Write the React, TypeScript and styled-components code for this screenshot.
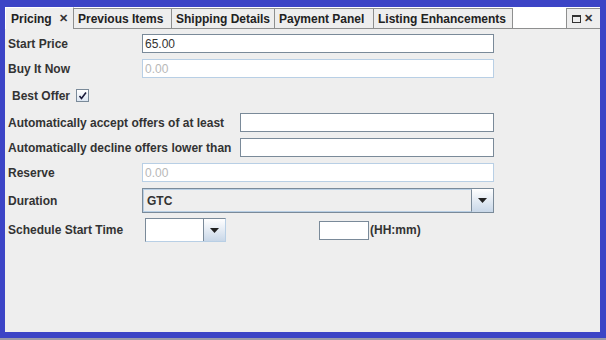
import styled, { createGlobalStyle } from "styled-components";

const GlobalStyle = createGlobalStyle`
    html, body {
        margin: 0;
        padding: 0;
        width: 606px;
        height: 340px;
        overflow: hidden;
        background: #9a9aa8;
    }
`

const tabs = [
    {title: "Previous Items", width: "98px"},
    {title: "Shipping Details", width: "103px"},
    {title: "Payment Panel", width: "99px"},
    {title: "Listing Enhancements", width: "139px"},
];

const ArrowIcon = () => (
    <svg width="9" height="5" viewBox="0 0 9 5">
        <path d="M0 0 H9 L4.5 5 Z" fill="#222"/>
    </svg>
);

export default function App() {
    return (
        <Frame>
            <GlobalStyle/>
            <TabBar>
                <SelectedTab>
                    Pricing
                    <CloseGlyph>✕</CloseGlyph>
                </SelectedTab>
                {tabs.map((t) => <Tab key={t.title} width={t.width}>{t.title}</Tab>)}
                <TabFiller/>
                <WindowButtons>
                    <MaxBox/>
                    <CloseSmall>✕</CloseSmall>
                </WindowButtons>
            </TabBar>
            <Content>
                <Row>
                    <Label width="134px">Start Price</Label>
                    <TextField width="352px">65.00</TextField>
                </Row>
                <Row>
                    <Label width="134px">Buy It Now</Label>
                    <TextField width="352px" disabled>0.00</TextField>
                </Row>
                <OfferRow>
                    <Label width="auto">Best Offer</Label>
                    <CheckBox>
                        <svg width="9" height="9" viewBox="0 0 9 9">
                            <path d="M1.5 5 L3.5 7.5 L8 1.5" stroke="#1a1a3a" strokeWidth="1.6" fill="none"/>
                        </svg>
                    </CheckBox>
                </OfferRow>
                <Row>
                    <Label width="232px">Automatically accept offers of at least</Label>
                    <TextField width="254px"/>
                </Row>
                <Row>
                    <Label width="232px">Automatically decline offers lower than</Label>
                    <TextField width="254px"/>
                </Row>
                <Row>
                    <Label width="134px">Reserve</Label>
                    <TextField width="352px" disabled>0.00</TextField>
                </Row>
                <ComboRow>
                    <Label width="134px">Duration</Label>
                    <Combo width="352px">
                        <ComboValue>GTC</ComboValue>
                        <ComboButton><ArrowIcon/></ComboButton>
                    </Combo>
                </ComboRow>
                <ScheduleRow>
                    <Label width="137px">Schedule Start Time</Label>
                    <SmallCombo>
                        <SmallComboValue/>
                        <ComboButton><ArrowIcon/></ComboButton>
                    </SmallCombo>
                    <TimeField/>
                    <Hint>(HH:mm)</Hint>
                </ScheduleRow>
            </Content>
        </Frame>
    );
}

const Frame = styled.div`
    box-sizing: border-box;
    width: 606px;
    height: 338px;
    border: solid #3c44c6;
    border-width: 7px 6px 6px 5px;
    background: #eeeeee;
    display: flex;
    flex-direction: column;
    font-family: "Liberation Sans", Arial, sans-serif;
    font-size: 12px;
    font-weight: bold;
    color: #333333;
`

const TabBar = styled.div`
    display: flex;
    height: 21px;
    align-items: flex-end;
    background: #ffffff;
    border-bottom: 1px solid #8e8f8f;
`

const Tab = styled.div<{ width?: string }>`
    box-sizing: border-box;
    width: ${(p) => p.width ?? "auto"};
    height: 20px;
    padding: 0 4px;
    display: flex;
    align-items: center;
    background: #eeeeee;
    border: 1px solid #8e8f8f;
    border-left: none;
    border-bottom: none;
    color: #222;
    white-space: nowrap;
`

const SelectedTab = styled(Tab)`
    height: 22px;
    margin-bottom: -1px;
    padding: 0 5px;
    width: 69px;
    justify-content: space-between;
    border-right: 1px solid #8e8f8f;
    border-left: 1px solid #ffffff;
    border-top: 1px solid #ffffff;
`

const CloseGlyph = styled.span`
    font-size: 11px;
    color: #333;
`

const TabFiller = styled.div`
    flex: 1;
`

const WindowButtons = styled.div`
    box-sizing: border-box;
    width: 34px;
    height: 20px;
    display: flex;
    align-items: center;
    gap: 3px;
    padding-left: 5px;
    background: #eeeeee;
    border-left: 1px solid #8e8f8f;
    border-top: 1px solid #8e8f8f;
`

const MaxBox = styled.span`
    box-sizing: border-box;
    width: 9px;
    height: 8px;
    border: 1px solid #333;
    border-top-width: 2px;
`

const CloseSmall = styled.span`
    font-size: 11px;
    color: #333;
`

const Content = styled.div`
    display: flex;
    flex-direction: column;
    padding: 5px 0 0 3px;
`

const Row = styled.div`
    display: flex;
    align-items: center;
    height: 19px;
    margin-bottom: 6px;
`

const OfferRow = styled(Row)`
    padding-left: 4px;
    gap: 6px;
    margin: 2px 0 8px;
`

const ComboRow = styled(Row)`
    height: 25px;
    margin-bottom: 5px;
`

const ScheduleRow = styled(Row)`
    height: 24px;
`

const Label = styled.div<{ width: string }>`
    width: ${(p) => p.width};
    flex-shrink: 0;
    white-space: nowrap;
`

const TextField = styled.div<{ width?: string; disabled?: boolean }>`
    box-sizing: border-box;
    width: ${(p) => p.width};
    height: 19px;
    padding: 0 2px;
    display: flex;
    align-items: center;
    background: #ffffff;
    border: 1px solid ${(p) => (p.disabled ? "#b8cfe5" : "#7a8a99")};
    font-weight: normal;
    color: ${(p) => (p.disabled ? "#b8b8b8" : "#333")};
`

const CheckBox = styled.div`
    box-sizing: border-box;
    width: 13px;
    height: 13px;
    border: 1px solid #7a8a99;
    background: linear-gradient(#ffffff, #dce6f2);
    display: flex;
    align-items: center;
    justify-content: center;
`

const Combo = styled.div<{ width: string }>`
    box-sizing: border-box;
    width: ${(p) => p.width};
    height: 25px;
    display: flex;
    border: 1px solid #7a8a99;
    background: #eeeeee;
`

const ComboValue = styled.div`
    flex: 1;
    display: flex;
    align-items: center;
    padding-left: 3px;
    border: 1px solid #b8cfe5;
    border-right: 1px solid #7a8a99;
`

const ComboButton = styled.div`
    width: 21px;
    display: flex;
    align-items: center;
    justify-content: center;
    background: linear-gradient(#ffffff, #c8d7e8);
`

const SmallCombo = styled.div`
    box-sizing: border-box;
    width: 81px;
    height: 24px;
    display: flex;
    border: 1px solid #7a8a99;
    border-bottom-color: #b8cfe5;
    border-right-color: #b8cfe5;
    background: #ffffff;
`

const SmallComboValue = styled.div`
    flex: 1;
    border-right: 1px solid #7a8a99;
`

const TimeField = styled(TextField)`
    width: 50px;
    margin-left: 93px;
    border-color: #7a8a99;
`

const Hint = styled.div`
    margin-left: 1px;
    color: #333;
`
